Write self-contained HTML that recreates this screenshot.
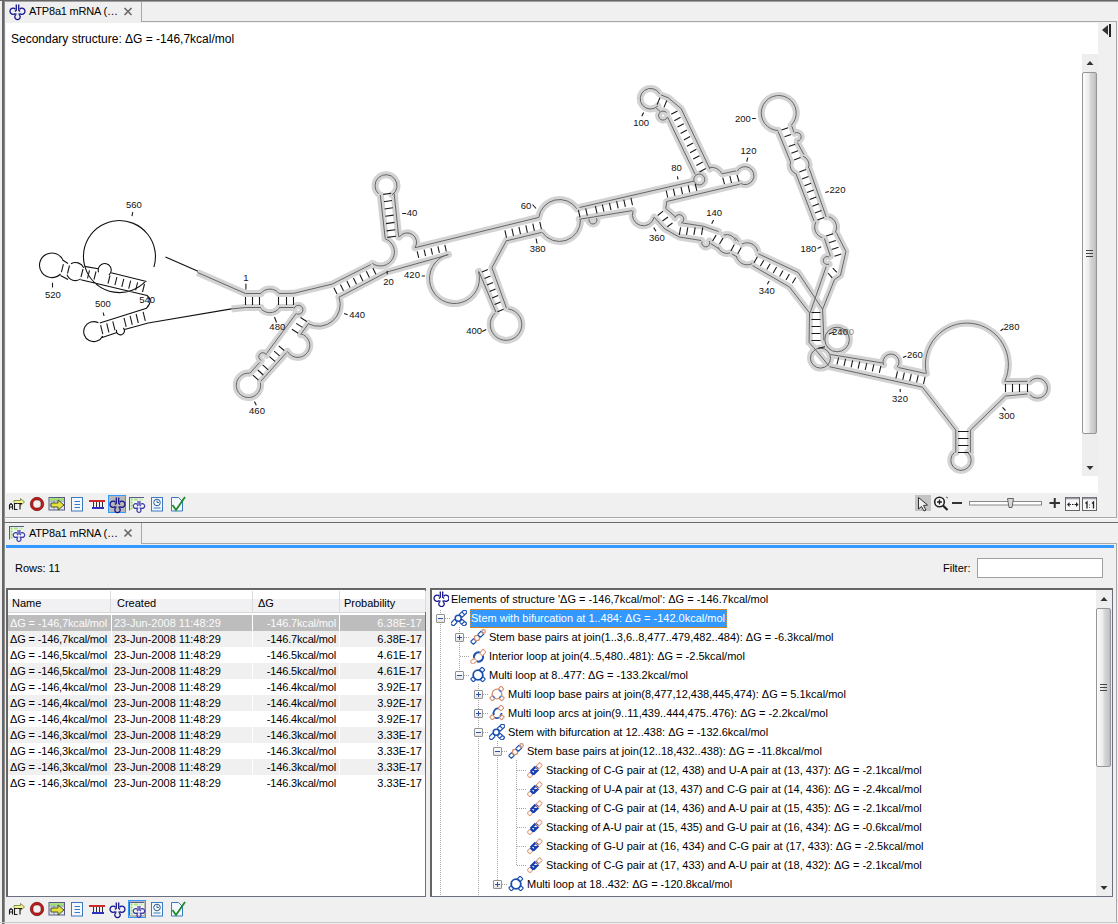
<!DOCTYPE html>
<html><head><meta charset="utf-8">
<style>
*{margin:0;padding:0;box-sizing:border-box}
html,body{width:1118px;height:924px;overflow:hidden;background:#f0f0f0;font-family:"Liberation Sans",sans-serif;font-size:11px;color:#000}
.a{position:absolute}
.t{position:absolute;white-space:pre;line-height:13px}
</style></head><body>
<!-- ============ UPPER PANEL ============ -->
<div class="a" style="left:0;top:0;width:1118px;height:1px;background:#666"></div>
<div class="a" style="left:2px;top:1px;width:1116px;height:1px;background:#a0a0a0"></div>
<div class="a" style="left:2px;top:0;width:2px;height:924px;background:#666"></div>
<div class="a" style="left:4px;top:1px;width:1px;height:923px;background:#8e8e8e"></div>
<div class="a" style="left:1116px;top:21px;width:1px;height:497px;background:#a8a8a8"></div>
<!-- tab strip bottom line -->
<div class="a" style="left:141px;top:21px;width:975px;height:1px;background:#a8a8a8"></div>
<!-- tab -->
<div class="a" style="left:5px;top:2px;width:136px;height:21px;background:#efefef"></div>
<div class="a" style="left:141px;top:2px;width:1px;height:20px;background:#a8a8a8"></div>
<div class="t" style="left:29px;top:5px;letter-spacing:-0.2px">ATP8a1 mRNA (…</div>
<svg class="a" style="left:0;top:0" width="140" height="20"><path d="M124.5 8L131.5 15M131.5 8L124.5 15" stroke="#666" stroke-width="1.6"/></svg>
<!-- content white -->
<div class="a" style="left:6px;top:23px;width:1092px;height:470px;background:#fff"></div>
<div class="t" style="left:11px;top:32px;font-size:12px;line-height:15px">Secondary structure: ΔG = -146,7kcal/mol</div>
<!-- right strip icon -->
<div class="a" style="left:1102px;top:25px;width:0;height:0;border-top:5px solid transparent;border-bottom:5px solid transparent;border-right:6px solid #333"></div>
<div class="a" style="left:1109px;top:24px;width:2px;height:13px;background:#222"></div>
<!-- upper scrollbar -->
<div class="a" style="left:1082px;top:54px;width:16px;height:422px;background:#eeeeee"></div>
<div class="a" style="left:1082px;top:72px;width:15px;height:362px;border:1px solid #969696;border-radius:2px;background:linear-gradient(to right,#fbfbfb,#ececec 45%,#d8d8da 55%,#c6c6ca 90%,#b8b8b8)"></div>
<div class="a" style="left:1086px;top:250px;width:7px;height:1px;background:#444;box-shadow:0 3px 0 #444,0 6px 0 #444"></div>
<svg class="a" style="left:1082px;top:54px" width="16" height="422"><path d="M4.5 11L8 7L11.5 11Z" fill="#333"/><path d="M4.5 412L8 416L11.5 412Z" fill="#333"/></svg>
<svg class="a" style="left:0;top:0" width="1118" height="924" viewBox="0 0 1118 924"><g transform="translate(0.5 0.5)">
<path d="M245.0 293.0 L260.4 293.0 M260.2 293.0A11.8 11.8 0 0 1 278.6 293.0 M278.6 307.8A11.8 11.8 0 0 1 260.2 307.8 M278.4 293.0 L293.3 292.8 L331.6 283.6 L370.3 264.1 M371.8 262.9A14 14 0 1 0 384.6 238.3 M384.7 237.8 L379.8 194.5 M378.0 193.2A11 11 0 1 1 391.5 194.4 M393.6 192.8 L398.2 236.3 M398.7 236.6A9.5 9.5 0 0 1 414.5 247.2 M414.5 247.2 L538.0 217.0 M538.2 217.1A21 21 0 0 1 576.4 208.3 M580.0 219.3A21 21 0 0 1 541.6 231.7 M579.0 207.0 L693.5 180.6 M693.3 179.0A5.5 5.5 0 1 0 704.3 179.0A5.5 5.5 0 1 0 693.3 179.0 M694.7 174.0 L667.0 116.5 M666.8 116.6A4.5 4.5 0 1 1 666.0 112.2 M657.4 105.4A10.3 10.3 0 1 1 659.1 93.4 M655.7 107.6 L659.5 110.8 M660.4 94.4 L667.6 97.2 L680.7 108.2 L709.4 168.5 M708.6 166.8Q717.5 166 721.5 173.3L735.5 170.4 M736.5 170.9A9 9 0 1 1 739.9 182.9 M739.4 183.7 L666.2 201.0 L665.3 208.0 L674.5 216.0 M674.4 217.4A4.5 4.5 0 1 1 680.6 222.7 M682.0 222.5 L702.8 225.7 L718.0 231.0 M723.2 234.6A9.5 9.5 0 0 1 735.3 240.3 M729.6 252.4A9.5 9.5 0 0 1 717.5 246.7 M734.8 237.0 L738.0 241.0 M741.5 243.5A11 11 0 0 1 757.3 250.9 M751.7 263.1A11 11 0 0 1 735.9 255.7 M757.9 253.3 L797.6 272.0 L822.1 308.8 L823.4 340.0 M245.0 307.0 L260.4 307.0 M278.4 307.0 L293.0 307.0 M293.6 308.0A4.5 4.5 0 1 1 296.0 313.3 M295.6 313.1 L266.0 353.1 M260.8 359.9A4 4 0 1 1 266.0 354.7 M259.2 361.9 L249.5 372.6 M259.9 382.3A12.2 12.2 0 1 1 249.3 372.7 M260.2 380.9 L286.0 352.2 M286.9 350.9A12 12 0 1 0 300.4 333.3 M300.2 334.1 L308.1 322.9 M307.9 323.3A21.8 21.8 0 0 0 338.5 296.7 M338.4 296.7 L386.5 271.5 L448.0 254.2 M447.1 254.0A25 25 0 1 0 478.0 271.1 M478.4 271.0 L495.5 311.8 M507.8 308.4A15.8 15.8 0 1 1 494.6 312.6 M506.0 307.7 L491.4 267.1 L506.0 240.0 M506.0 240.3 L541.0 231.9 M578.7 218.8 L631.8 210.1 M596.0 217.6A4 4 0 1 1 588.7 218.2 M632.6 210.4A11 11 0 1 0 653.6 216.8 M653.7 216.8 L664.4 228.5 L678.7 236.5 L700.8 240.0 M708.8 240.5A4 4 0 1 1 701.5 241.1 M710.2 243.0 L718.5 248.4 M731.3 253.3 L736.3 256.3 M752.0 265.1 L789.0 286.5 L809.0 312.4 L808.6 342.0 M777.7 130.0A17.5 17.5 0 1 1 790.7 124.8 M777.6 131.0 L790.0 161.3 M791.2 125.3 L793.5 131.7 M794.1 132.7A4.3 4.3 0 1 1 796.8 140.6 M796.9 142.0 L803.3 154.0 M795.2 173.2A9.5 9.5 0 0 1 790.1 161.3 M802.6 155.7A9.5 9.5 0 0 1 808.0 167.5 M795.4 173.0 L813.6 220.6 M808.6 167.7 L825.7 216.3 M821.9 237.2A11 11 0 0 1 815.5 221.4 M828.3 216.2A11 11 0 0 1 834.7 232.0 M823.9 238.0 L829.9 255.8 M828.6 263.6A4 4 0 1 1 828.6 256.4 M825.7 266.0 L809.6 312.4 M835.8 232.0 L845.4 251.0 L840.0 274.9 L834.0 279.0 L822.1 308.8 M824.3 339.0A12.3 12.3 0 1 0 848.9 339.0A12.3 12.3 0 1 0 824.3 339.0 M810.0 357.6A10 10 0 1 0 830.0 357.6A10 10 0 1 0 810.0 357.6 M808.6 342.0 L813.2 347.0 L828.3 365.2 M830.0 354.0 L882.2 362.5 M883.0 364.3A8 8 0 1 1 896.6 366.7 M897.9 367.0 L925.0 373.0 M828.9 366.2 L922.0 386.7 L955.3 429.6 L955.3 452.0 M925.9 373.1A41.5 41.5 0 1 1 1004.2 381.2 M1005.0 381.0 L1027.0 380.8 M1005.0 395.5 L1027.0 393.5 M1029.3 381.3A10 10 0 1 1 1029.3 394.1 M1005.0 395.5 L969.9 429.6 L969.9 452.0 M967.1 451.9A10.2 10.2 0 1 1 953.9 451.9" fill="none" stroke="#d3d3d3" stroke-width="7.0" stroke-linecap="round" stroke-linejoin="round"/>
<path d="M197 272L245 293 M231 308.4L245 307" fill="none" stroke="#d3d3d3" stroke-width="7.0" stroke-linecap="butt"/>
<path d="M197 272L245 293 M245.0 293.0 L260.4 293.0 M260.2 293.0A11.8 11.8 0 0 1 278.6 293.0 M278.6 307.8A11.8 11.8 0 0 1 260.2 307.8 M278.4 293.0 L293.3 292.8 L331.6 283.6 L370.3 264.1 M371.8 262.9A14 14 0 1 0 384.6 238.3 M384.7 237.8 L379.8 194.5 M378.0 193.2A11 11 0 1 1 391.5 194.4 M393.6 192.8 L398.2 236.3 M398.7 236.6A9.5 9.5 0 0 1 414.5 247.2 M414.5 247.2 L538.0 217.0 M538.2 217.1A21 21 0 0 1 576.4 208.3 M580.0 219.3A21 21 0 0 1 541.6 231.7 M579.0 207.0 L693.5 180.6 M693.3 179.0A5.5 5.5 0 1 0 704.3 179.0A5.5 5.5 0 1 0 693.3 179.0 M694.7 174.0 L667.0 116.5 M666.8 116.6A4.5 4.5 0 1 1 666.0 112.2 M657.4 105.4A10.3 10.3 0 1 1 659.1 93.4 M655.7 107.6 L659.5 110.8 M660.4 94.4 L667.6 97.2 L680.7 108.2 L709.4 168.5 M708.6 166.8Q717.5 166 721.5 173.3L735.5 170.4 M736.5 170.9A9 9 0 1 1 739.9 182.9 M739.4 183.7 L666.2 201.0 L665.3 208.0 L674.5 216.0 M674.4 217.4A4.5 4.5 0 1 1 680.6 222.7 M682.0 222.5 L702.8 225.7 L718.0 231.0 M723.2 234.6A9.5 9.5 0 0 1 735.3 240.3 M729.6 252.4A9.5 9.5 0 0 1 717.5 246.7 M734.8 237.0 L738.0 241.0 M741.5 243.5A11 11 0 0 1 757.3 250.9 M751.7 263.1A11 11 0 0 1 735.9 255.7 M757.9 253.3 L797.6 272.0 L822.1 308.8 L823.4 340.0 M231 308.4L245 307 M245.0 307.0 L260.4 307.0 M278.4 307.0 L293.0 307.0 M293.6 308.0A4.5 4.5 0 1 1 296.0 313.3 M295.6 313.1 L266.0 353.1 M260.8 359.9A4 4 0 1 1 266.0 354.7 M259.2 361.9 L249.5 372.6 M259.9 382.3A12.2 12.2 0 1 1 249.3 372.7 M260.2 380.9 L286.0 352.2 M286.9 350.9A12 12 0 1 0 300.4 333.3 M300.2 334.1 L308.1 322.9 M307.9 323.3A21.8 21.8 0 0 0 338.5 296.7 M338.4 296.7 L386.5 271.5 L448.0 254.2 M447.1 254.0A25 25 0 1 0 478.0 271.1 M478.4 271.0 L495.5 311.8 M507.8 308.4A15.8 15.8 0 1 1 494.6 312.6 M506.0 307.7 L491.4 267.1 L506.0 240.0 M506.0 240.3 L541.0 231.9 M578.7 218.8 L631.8 210.1 M596.0 217.6A4 4 0 1 1 588.7 218.2 M632.6 210.4A11 11 0 1 0 653.6 216.8 M653.7 216.8 L664.4 228.5 L678.7 236.5 L700.8 240.0 M708.8 240.5A4 4 0 1 1 701.5 241.1 M710.2 243.0 L718.5 248.4 M731.3 253.3 L736.3 256.3 M752.0 265.1 L789.0 286.5 L809.0 312.4 L808.6 342.0 M777.7 130.0A17.5 17.5 0 1 1 790.7 124.8 M777.6 131.0 L790.0 161.3 M791.2 125.3 L793.5 131.7 M794.1 132.7A4.3 4.3 0 1 1 796.8 140.6 M796.9 142.0 L803.3 154.0 M795.2 173.2A9.5 9.5 0 0 1 790.1 161.3 M802.6 155.7A9.5 9.5 0 0 1 808.0 167.5 M795.4 173.0 L813.6 220.6 M808.6 167.7 L825.7 216.3 M821.9 237.2A11 11 0 0 1 815.5 221.4 M828.3 216.2A11 11 0 0 1 834.7 232.0 M823.9 238.0 L829.9 255.8 M828.6 263.6A4 4 0 1 1 828.6 256.4 M825.7 266.0 L809.6 312.4 M835.8 232.0 L845.4 251.0 L840.0 274.9 L834.0 279.0 L822.1 308.8 M824.3 339.0A12.3 12.3 0 1 0 848.9 339.0A12.3 12.3 0 1 0 824.3 339.0 M810.0 357.6A10 10 0 1 0 830.0 357.6A10 10 0 1 0 810.0 357.6 M808.6 342.0 L813.2 347.0 L828.3 365.2 M830.0 354.0 L882.2 362.5 M883.0 364.3A8 8 0 1 1 896.6 366.7 M897.9 367.0 L925.0 373.0 M828.9 366.2 L922.0 386.7 L955.3 429.6 L955.3 452.0 M925.9 373.1A41.5 41.5 0 1 1 1004.2 381.2 M1005.0 381.0 L1027.0 380.8 M1005.0 395.5 L1027.0 393.5 M1029.3 381.3A10 10 0 1 1 1029.3 394.1 M1005.0 395.5 L969.9 429.6 L969.9 452.0 M967.1 451.9A10.2 10.2 0 1 1 953.9 451.9" fill="none" stroke="#666" stroke-width="1.0"/>
<path d="M153.4 266.5A36 36 0 1 0 145.2 280.7 M165.0 256.6 L197.5 270.7 M60.0 273.5A12.3 12.3 0 1 1 62.8 260.4 M62.5 259.8 L67.5 263.0 M70.5 263.2A9 9 0 0 1 83.2 267.2 M80.2 278.4A9 9 0 0 1 66.5 274.1 M83.8 265.9 L97.8 268.3 M98.1 271.7A6.5 6.5 0 1 1 108.4 274.5 M110.6 272.3 L146.0 281.0 M60.0 275.0 L67.5 279.0 M80.3 279.3L146.6 295Q153 300 146 307.7L99.3 322.5 M102.2 335.5A10 10 0 1 1 97.9 322.3 M101.0 337.2 L116.5 332.0 M122.8 327.5A4 4 0 1 1 116.1 329.3 M124.0 329.0 L147.7 322.5 L231.0 308.4" fill="none" stroke="#111" stroke-width="1.1"/>
<path d="M132.2 211.6L131.5 215.6 M52.0 282.2L52.0 286.9 M102.7 312.0L103.5 315.5 M245.0 296.5L245.0 304.5 M252.0 296.5L252.0 304.5 M259.0 296.5L259.0 304.5 M278.0 296.5L278.0 304.5 M286.0 296.5L286.0 304.5 M293.0 296.5L293.0 304.5 M333.4 287.2L336.5 293.5 M339.9 283.9L343.0 290.2 M346.4 280.6L349.5 286.9 M352.9 277.4L356.0 283.7 M359.3 274.1L362.4 280.4 M365.8 270.8L368.9 277.1 M372.3 267.5L375.4 273.8 M382.7 193.9L390.7 192.7 M383.4 201.2L391.5 200.0 M384.1 208.5L392.3 207.3 M384.8 215.8L393.1 214.6 M385.5 223.1L394.0 221.9 M386.1 230.4L394.8 229.2 M386.8 236.9L395.5 235.7 M416.7 250.8L418.2 257.3 M423.6 249.2L425.1 255.7 M430.5 247.6L432.0 254.1 M437.4 245.9L438.9 252.4 M444.3 244.3L445.8 250.8 M504.4 229.8L506.0 237.1 M511.4 228.1L513.0 235.4 M518.4 226.4L520.0 233.7 M525.3 224.8L526.9 232.1 M532.3 223.1L533.9 230.4 M539.3 221.4L540.9 228.7 M481.4 271.5L487.4 268.9 M484.0 278.0L490.0 275.4 M486.5 284.5L492.5 281.9 M489.1 291.0L495.1 288.4 M491.6 297.5L497.6 294.9 M494.1 304.0L500.1 301.4 M497.0 311.3L503.0 308.7 M577.9 209.6L579.5 216.8 M585.2 207.9L586.8 215.1 M594.9 205.6L596.5 212.8 M601.8 204.0L603.4 211.2 M608.9 202.4L610.5 209.6 M616.1 200.7L617.7 207.9 M623.3 199.1L624.9 206.3 M630.4 197.4L632.0 204.6 M665.7 190.0L667.2 197.0 M672.9 188.3L674.4 195.3 M680.5 186.6L682.0 193.6 M687.7 184.9L689.2 191.9 M694.8 183.3L696.3 190.3 M670.7 113.8L677.0 110.4 M673.8 120.2L680.1 116.8 M677.0 126.6L683.3 123.2 M680.1 133.0L686.4 129.6 M683.3 139.4L689.6 136.0 M686.4 145.8L692.7 142.4 M689.6 152.2L695.9 148.8 M692.7 158.6L699.0 155.2 M695.9 165.0L702.2 161.6 M699.0 171.4L705.3 168.0 M659.4 97.2L656.6 104.1 M666.3 100.0L663.5 106.9 M722.2 177.2L724.0 183.7 M729.4 175.5L731.0 182.5 M736.5 174.4L738.5 181.0 M657.2 215.0L662.6 210.6 M662.0 220.5L667.5 216.5 M666.8 226.3L672.0 222.5 M680.1 226.8L678.8 234.3 M687.3 226.8L686.0 234.3 M694.7 226.8L693.4 234.3 M702.3 226.8L701.0 234.3 M715.6 234.6L712.1 240.5 M722.5 237.6L719.0 243.5 M733.8 244.0L730.4 250.4 M740.7 246.9L737.2 253.3 M756.9 256.3L753.5 262.2 M763.3 259.7L759.9 265.6 M769.7 263.2L766.3 269.1 M776.1 266.6L772.7 272.5 M782.5 270.0L779.1 275.9 M788.9 273.5L785.5 279.4 M795.3 276.9L791.9 282.8 M781.0 129.5L787.6 127.2 M784.0 136.3L790.6 134.0 M788.2 146.1L794.7 143.7 M790.9 152.8L797.4 150.3 M793.5 159.4L800.0 157.0 M798.8 171.5L805.4 169.0 M801.4 178.4L808.0 175.9 M804.0 185.2L810.6 182.7 M806.6 192.1L813.2 189.6 M809.2 198.9L815.8 196.4 M811.8 205.8L818.4 203.3 M814.4 212.6L821.0 210.1 M817.0 219.5L823.6 217.0 M825.7 235.6L832.5 233.2 M828.5 242.3L835.3 239.9 M831.2 249.1L838.0 246.7 M834.0 255.8L840.8 253.4 M832.3 267.7L836.4 271.9 M827.5 272.5L831.7 277.3 M811.0 312.0L820.0 312.0 M811.0 319.0L820.0 319.0 M811.0 326.0L820.0 326.0 M811.0 333.0L820.0 333.0 M811.0 340.0L820.0 340.0 M817.7 347.7L824.5 346.2 M838.1 357.0L836.5 364.0 M845.1 358.4L843.5 365.4 M852.2 359.8L850.6 366.8 M859.2 361.1L857.6 368.1 M866.3 362.5L864.7 369.5 M873.4 363.9L871.8 370.9 M880.4 365.3L878.8 372.3 M897.0 370.8L895.4 377.8 M903.9 372.2L902.3 379.2 M910.8 373.6L909.2 380.6 M917.7 374.9L916.1 381.9 M924.6 376.3L923.0 383.3 M1005.0 383.5L1005.0 391.5 M1012.0 383.5L1012.0 391.5 M1019.0 383.5L1019.0 391.5 M1027.0 383.5L1027.0 391.5 M957.5 431.0L968.0 431.0 M957.5 438.0L968.0 438.0 M957.5 445.0L968.0 445.0 M957.5 452.0L968.0 452.0 M252.4 374.6L257.9 379.6 M257.3 369.5L262.8 374.5 M262.2 364.3L267.7 369.3 M269.0 356.1L274.5 360.8 M273.6 350.7L279.1 355.4 M278.2 345.3L283.7 350.0 M291.4 328.8L297.7 332.8 M295.7 322.9L302.0 326.9 M300.0 317.0L306.3 321.0 M245.4 283.3L245.4 289.0 M274.0 316.5L276.0 322.0 M253.9 400.9L255.8 404.8 M343.6 313.1L347.1 314.3 M386.7 270.4L386.7 273.8 M421.2 275.5L424.4 275.5 M401.7 213.0L405.8 213.0 M481.7 331.0L485.7 329.0 M532.0 204.0L535.6 208.0 M535.6 238.0L536.5 243.0 M643.1 112.0L641.3 115.7 M676.9 175.8L677.5 179.0 M747.3 157.2L746.2 161.1 M751.6 118.0L755.3 118.0 M824.9 192.1L828.3 190.9 M713.1 219.4L711.2 223.3 M653.2 227.1L655.5 230.7 M768.7 280.4L766.8 283.8 M817.1 247.9L820.7 246.3 M828.4 333.4L833.4 331.4 M902.5 357.0L906.0 355.5 M899.7 388.6L899.7 391.6 M1000.0 330.2L1003.0 328.2 M1002.0 406.8L1005.0 410.0 M62.9 263.6L60.9 271.6 M69.0 265.0L67.0 273.0 M82.5 268.5L80.5 276.5 M89.0 269.8L87.0 277.8 M95.5 271.0L93.5 279.0 M109.5 275.0L107.5 283.0 M116.4 276.7L114.4 284.7 M123.3 278.4L121.3 286.4 M130.2 280.1L128.2 288.1 M137.1 281.8L135.1 289.8 M144.0 283.5L142.0 291.5 M100.1 324.7L102.3 333.7 M106.2 322.8L108.4 331.8 M112.3 320.9L114.5 329.9 M123.5 317.3L125.7 326.3 M129.6 315.4L131.8 324.4 M135.6 313.5L137.8 322.5 M142.6 311.3L144.8 320.3" fill="none" stroke="#1a1a1a" stroke-width="1.1"/>
<g font-family="Liberation Sans" font-size="9.5" fill="#111" text-anchor="middle">
<text x="133.4" y="207.3">560</text>
<text x="52.4" y="297.0">520</text>
<text x="102.4" y="306.9">500</text>
<text x="146.6" y="302.8">540</text>
<text x="245.4" y="280.2">1</text>
<text x="276.8" y="329.9">480</text>
<text x="256.5" y="413.6">460</text>
<text x="356.7" y="317.5">440</text>
<text x="388.0" y="284.0">20</text>
<text x="411.5" y="277.6">420</text>
<text x="411.5" y="215.4">40</text>
<text x="473.6" y="333.8">400</text>
<text x="525.5" y="208.0">60</text>
<text x="537.2" y="251.9">380</text>
<text x="640.6" y="125.2">100</text>
<text x="676.0" y="170.3">80</text>
<text x="748.0" y="153.0">120</text>
<text x="742.4" y="121.1">200</text>
<text x="837.0" y="192.1">220</text>
<text x="713.6" y="215.1">140</text>
<text x="656.4" y="240.0">360</text>
<text x="766.3" y="293.9">340</text>
<text x="807.9" y="251.3">180</text>
<text x="839.5" y="334.6">240</text>
<text x="914.4" y="357.3">260</text>
<text x="899.5" y="401.1">320</text>
<text x="1011.0" y="329.5">280</text>
<text x="1006.3" y="418.9">300</text>
<text x="845.5" y="334" fill="#777" opacity="0.8">260</text>
</g></g></svg>
<!-- toolbar bottom -->
<div class="a" style="left:4px;top:517px;width:1113px;height:1px;background:#aaaaaa"></div>
<div class="a" style="left:5px;top:518px;width:1111px;height:1px;background:#fafafa"></div>
<div class="a" style="left:2px;top:522px;width:1116px;height:1px;background:#6a6a6a"></div>

<!-- ============ LOWER PANEL ============ -->
<div class="a" style="left:5px;top:523px;width:136px;height:21px;background:#efefef"></div>
<div class="a" style="left:141px;top:523px;width:1px;height:21px;background:#a8a8a8"></div>
<div class="t" style="left:29px;top:527px;letter-spacing:-0.2px">ATP8a1 mRNA (…</div>
<svg class="a" style="left:0;top:520px" width="140" height="24"><path d="M124.5 9.5L131.5 16.5M131.5 9.5L124.5 16.5" stroke="#666" stroke-width="1.6"/></svg>
<div class="a" style="left:141px;top:543px;width:976px;height:1px;background:#a8a8a8"></div>
<div class="a" style="left:1116px;top:543px;width:1px;height:379px;background:#a8a8a8"></div>
<div class="a" style="left:6px;top:545px;width:1108px;height:3px;background:#3399ff"></div>
<div class="a" style="left:0;top:922px;width:1118px;height:1px;background:#c8c8c8"></div>

<div class="t" style="left:15px;top:562px">Rows: 11</div>
<div class="t" style="left:943px;top:562px">Filter:</div>
<div class="a" style="left:977px;top:558px;width:126px;height:20px;background:#fff;border:1px solid #a0a0a0"></div>

<!-- table -->
<div class="a" style="left:6px;top:588px;width:420px;height:309px;background:#fff;border:2px solid #666;border-right:1px solid #6a7080;border-bottom:1px solid #6a7080"></div>
<div class="a" style="left:8px;top:599px;width:417px;height:13px;background:#f1f1f3"></div>
<div class="a" style="left:8px;top:612px;width:417px;height:1px;background:#d6d6d6"></div>
<div class="a" style="left:110px;top:591px;width:1px;height:21px;background:#dcdcdc"></div>
<div class="a" style="left:252px;top:591px;width:1px;height:21px;background:#dcdcdc"></div>
<div class="a" style="left:339px;top:591px;width:1px;height:21px;background:#dcdcdc"></div>
<div class="a" style="left:425px;top:591px;width:1px;height:21px;background:#dcdcdc"></div>
<div class="t" style="left:12px;top:597px">Name</div>
<div class="t" style="left:117px;top:597px">Created</div>
<div class="t" style="left:258px;top:597px">ΔG</div>
<div class="t" style="left:344px;top:597px">Probability</div>
<div class="a" style="left:8px;top:615px;width:417px;height:16px;background:#bdbdbd"></div>
<div class="a" style="left:111px;top:615px;width:1px;height:16px;background:#fff"></div>
<div class="a" style="left:252px;top:615px;width:1px;height:16px;background:#fff"></div>
<div class="a" style="left:339px;top:615px;width:1px;height:16px;background:#fff"></div>
<div class="t" style="left:10px;top:617px;color:#fafafa;letter-spacing:-0.15px">ΔG = -146,7kcal/mol</div>
<div class="t" style="left:114px;top:617px;color:#fafafa">23-Jun-2008 11:48:29</div>
<div class="t" style="left:253px;width:83px;text-align:right;top:617px;color:#fafafa;letter-spacing:-0.17px">-146.7kcal/mol</div>
<div class="t" style="left:340px;width:82px;text-align:right;top:617px;color:#fafafa">6.38E-17</div>
<div class="a" style="left:8px;top:631px;width:417px;height:16px;background:#f0f0f0"></div>
<div class="a" style="left:111px;top:631px;width:1px;height:16px;background:#fff"></div>
<div class="a" style="left:252px;top:631px;width:1px;height:16px;background:#fff"></div>
<div class="a" style="left:339px;top:631px;width:1px;height:16px;background:#fff"></div>
<div class="t" style="left:10px;top:633px;color:#000;letter-spacing:-0.15px">ΔG = -146,7kcal/mol</div>
<div class="t" style="left:114px;top:633px;color:#000">23-Jun-2008 11:48:29</div>
<div class="t" style="left:253px;width:83px;text-align:right;top:633px;color:#000;letter-spacing:-0.17px">-146.7kcal/mol</div>
<div class="t" style="left:340px;width:82px;text-align:right;top:633px;color:#000">6.38E-17</div>
<div class="a" style="left:111px;top:647px;width:1px;height:16px;background:#fff"></div>
<div class="a" style="left:252px;top:647px;width:1px;height:16px;background:#fff"></div>
<div class="a" style="left:339px;top:647px;width:1px;height:16px;background:#fff"></div>
<div class="t" style="left:10px;top:649px;color:#000;letter-spacing:-0.15px">ΔG = -146,5kcal/mol</div>
<div class="t" style="left:114px;top:649px;color:#000">23-Jun-2008 11:48:29</div>
<div class="t" style="left:253px;width:83px;text-align:right;top:649px;color:#000;letter-spacing:-0.17px">-146.5kcal/mol</div>
<div class="t" style="left:340px;width:82px;text-align:right;top:649px;color:#000">4.61E-17</div>
<div class="a" style="left:8px;top:663px;width:417px;height:16px;background:#f0f0f0"></div>
<div class="a" style="left:111px;top:663px;width:1px;height:16px;background:#fff"></div>
<div class="a" style="left:252px;top:663px;width:1px;height:16px;background:#fff"></div>
<div class="a" style="left:339px;top:663px;width:1px;height:16px;background:#fff"></div>
<div class="t" style="left:10px;top:665px;color:#000;letter-spacing:-0.15px">ΔG = -146,5kcal/mol</div>
<div class="t" style="left:114px;top:665px;color:#000">23-Jun-2008 11:48:29</div>
<div class="t" style="left:253px;width:83px;text-align:right;top:665px;color:#000;letter-spacing:-0.17px">-146.5kcal/mol</div>
<div class="t" style="left:340px;width:82px;text-align:right;top:665px;color:#000">4.61E-17</div>
<div class="a" style="left:111px;top:679px;width:1px;height:16px;background:#fff"></div>
<div class="a" style="left:252px;top:679px;width:1px;height:16px;background:#fff"></div>
<div class="a" style="left:339px;top:679px;width:1px;height:16px;background:#fff"></div>
<div class="t" style="left:10px;top:681px;color:#000;letter-spacing:-0.15px">ΔG = -146,4kcal/mol</div>
<div class="t" style="left:114px;top:681px;color:#000">23-Jun-2008 11:48:29</div>
<div class="t" style="left:253px;width:83px;text-align:right;top:681px;color:#000;letter-spacing:-0.17px">-146.4kcal/mol</div>
<div class="t" style="left:340px;width:82px;text-align:right;top:681px;color:#000">3.92E-17</div>
<div class="a" style="left:8px;top:695px;width:417px;height:16px;background:#f0f0f0"></div>
<div class="a" style="left:111px;top:695px;width:1px;height:16px;background:#fff"></div>
<div class="a" style="left:252px;top:695px;width:1px;height:16px;background:#fff"></div>
<div class="a" style="left:339px;top:695px;width:1px;height:16px;background:#fff"></div>
<div class="t" style="left:10px;top:697px;color:#000;letter-spacing:-0.15px">ΔG = -146,4kcal/mol</div>
<div class="t" style="left:114px;top:697px;color:#000">23-Jun-2008 11:48:29</div>
<div class="t" style="left:253px;width:83px;text-align:right;top:697px;color:#000;letter-spacing:-0.17px">-146.4kcal/mol</div>
<div class="t" style="left:340px;width:82px;text-align:right;top:697px;color:#000">3.92E-17</div>
<div class="a" style="left:111px;top:711px;width:1px;height:16px;background:#fff"></div>
<div class="a" style="left:252px;top:711px;width:1px;height:16px;background:#fff"></div>
<div class="a" style="left:339px;top:711px;width:1px;height:16px;background:#fff"></div>
<div class="t" style="left:10px;top:713px;color:#000;letter-spacing:-0.15px">ΔG = -146,4kcal/mol</div>
<div class="t" style="left:114px;top:713px;color:#000">23-Jun-2008 11:48:29</div>
<div class="t" style="left:253px;width:83px;text-align:right;top:713px;color:#000;letter-spacing:-0.17px">-146.4kcal/mol</div>
<div class="t" style="left:340px;width:82px;text-align:right;top:713px;color:#000">3.92E-17</div>
<div class="a" style="left:8px;top:727px;width:417px;height:16px;background:#f0f0f0"></div>
<div class="a" style="left:111px;top:727px;width:1px;height:16px;background:#fff"></div>
<div class="a" style="left:252px;top:727px;width:1px;height:16px;background:#fff"></div>
<div class="a" style="left:339px;top:727px;width:1px;height:16px;background:#fff"></div>
<div class="t" style="left:10px;top:729px;color:#000;letter-spacing:-0.15px">ΔG = -146,3kcal/mol</div>
<div class="t" style="left:114px;top:729px;color:#000">23-Jun-2008 11:48:29</div>
<div class="t" style="left:253px;width:83px;text-align:right;top:729px;color:#000;letter-spacing:-0.17px">-146.3kcal/mol</div>
<div class="t" style="left:340px;width:82px;text-align:right;top:729px;color:#000">3.33E-17</div>
<div class="a" style="left:111px;top:743px;width:1px;height:16px;background:#fff"></div>
<div class="a" style="left:252px;top:743px;width:1px;height:16px;background:#fff"></div>
<div class="a" style="left:339px;top:743px;width:1px;height:16px;background:#fff"></div>
<div class="t" style="left:10px;top:745px;color:#000;letter-spacing:-0.15px">ΔG = -146,3kcal/mol</div>
<div class="t" style="left:114px;top:745px;color:#000">23-Jun-2008 11:48:29</div>
<div class="t" style="left:253px;width:83px;text-align:right;top:745px;color:#000;letter-spacing:-0.17px">-146.3kcal/mol</div>
<div class="t" style="left:340px;width:82px;text-align:right;top:745px;color:#000">3.33E-17</div>
<div class="a" style="left:8px;top:759px;width:417px;height:16px;background:#f0f0f0"></div>
<div class="a" style="left:111px;top:759px;width:1px;height:16px;background:#fff"></div>
<div class="a" style="left:252px;top:759px;width:1px;height:16px;background:#fff"></div>
<div class="a" style="left:339px;top:759px;width:1px;height:16px;background:#fff"></div>
<div class="t" style="left:10px;top:761px;color:#000;letter-spacing:-0.15px">ΔG = -146,3kcal/mol</div>
<div class="t" style="left:114px;top:761px;color:#000">23-Jun-2008 11:48:29</div>
<div class="t" style="left:253px;width:83px;text-align:right;top:761px;color:#000;letter-spacing:-0.17px">-146.3kcal/mol</div>
<div class="t" style="left:340px;width:82px;text-align:right;top:761px;color:#000">3.33E-17</div>
<div class="a" style="left:111px;top:775px;width:1px;height:16px;background:#fff"></div>
<div class="a" style="left:252px;top:775px;width:1px;height:16px;background:#fff"></div>
<div class="a" style="left:339px;top:775px;width:1px;height:16px;background:#fff"></div>
<div class="t" style="left:10px;top:777px;color:#000;letter-spacing:-0.15px">ΔG = -146,3kcal/mol</div>
<div class="t" style="left:114px;top:777px;color:#000">23-Jun-2008 11:48:29</div>
<div class="t" style="left:253px;width:83px;text-align:right;top:777px;color:#000;letter-spacing:-0.17px">-146.3kcal/mol</div>
<div class="t" style="left:340px;width:82px;text-align:right;top:777px;color:#000">3.33E-17</div>

<!-- tree -->
<div class="a" style="left:430px;top:588px;width:683px;height:309px;background:#fff;border:2px solid #666;border-right:1px solid #6a7080;border-bottom:1px solid #6a7080"></div>
<div class="a" style="left:440px;top:610px;width:1px;height:286px;background:repeating-linear-gradient(to bottom,#a6a6a6 0 1px,transparent 1px 2px)"></div>
<div class="a" style="left:459px;top:627px;width:1px;height:44px;background:repeating-linear-gradient(to bottom,#a6a6a6 0 1px,transparent 1px 2px)"></div>
<div class="a" style="left:478px;top:684px;width:1px;height:212px;background:repeating-linear-gradient(to bottom,#a6a6a6 0 1px,transparent 1px 2px)"></div>
<div class="a" style="left:497px;top:741px;width:1px;height:139px;background:repeating-linear-gradient(to bottom,#a6a6a6 0 1px,transparent 1px 2px)"></div>
<div class="a" style="left:516px;top:760px;width:1px;height:106px;background:repeating-linear-gradient(to bottom,#a6a6a6 0 1px,transparent 1px 2px)"></div>
<svg class="a" style="left:433px;top:591px" width="16" height="16" viewBox="0 0 16 16"><g fill="none" stroke="#14148c" stroke-width="1.3"><path d="M7.3 0.5V6.2L6 7.4M9.7 0.5V6.2L11 7.4M6.6 9.6L7.4 10.4M10.4 9.6L9.6 10.4"/><path d="M6.4 5.2A3.1 3.1 0 1 0 6.4 9.4M10.6 5.2A3.1 3.1 0 1 1 10.6 9.4M7.2 10.5A2.7 2.7 0 1 0 9.8 10.5"/></g></svg>
<div class="t" style="left:451px;top:593px">Elements of structure 'ΔG = -146,7kcal/mol': ΔG = -146.7kcal/mol</div>
<div class="a" style="left:445px;top:618px;width:5px;height:1px;background:repeating-linear-gradient(to right,#a6a6a6 0 1px,transparent 1px 2px)"></div>
<div class="a" style="left:436px;top:614px;width:9px;height:9px;border:1px solid #919191;border-radius:1px;background:linear-gradient(#fff,#e4e4e4)"></div>
<div class="a" style="left:438px;top:618px;width:5px;height:1px;background:#3050a8"></div>
<svg class="a" style="left:451px;top:610px" width="16" height="16" viewBox="0 0 16 16"><circle cx="7.2" cy="8.3" r="3" fill="none" stroke="#1c4fb0" stroke-width="1.5"/><path d="M11.0 7.4L16.4 2.3M8.2 4.4L13.6 -0.7M11.0 7.4L8.2 4.4M13.7 4.8L10.9 1.9M16.4 2.3L13.6 -0.7" fill="none" stroke="#1c4fb0" stroke-width="1.2"/><path d="M3.6 9.2L-0.4 13.4M6.4 12.0L2.4 16.2M3.6 9.2L6.4 12.0M-0.4 13.4L2.4 16.2" fill="none" stroke="#1c4fb0" stroke-width="1.2"/><path d="M8.3 12.1L13.2 16.5M10.9 9.1L15.8 13.5M8.3 12.1L10.9 9.1M10.7 14.3L13.4 11.3M13.2 16.5L15.8 13.5" fill="none" stroke="#1c4fb0" stroke-width="1.2"/></svg>
<div class="a" style="left:470px;top:609px;width:257px;height:19px;background:#3399ff;border:1px dotted #1a1a1a;outline:1px dotted #e08a20;outline-offset:-1px"></div>
<div class="t" style="left:471px;top:612px;color:#fff">Stem with bifurcation at 1..484: ΔG = -142.0kcal/mol</div>
<div class="a" style="left:464px;top:637px;width:5px;height:1px;background:repeating-linear-gradient(to right,#a6a6a6 0 1px,transparent 1px 2px)"></div>
<div class="a" style="left:455px;top:633px;width:9px;height:9px;border:1px solid #919191;border-radius:1px;background:linear-gradient(#fff,#e4e4e4)"></div>
<div class="a" style="left:457px;top:637px;width:5px;height:1px;background:#3050a8"></div>
<div class="a" style="left:459px;top:635px;width:1px;height:5px;background:#3050a8"></div>
<svg class="a" style="left:470px;top:629px" width="16" height="16" viewBox="0 0 16 16"><path d="M3.4 15.4L6.4 12.4M0.6 12.6L3.6 9.6M3.4 15.4L0.6 12.6M6.4 12.4L3.6 9.6" fill="none" stroke="#1c4fb0" stroke-width="1.3"/><circle cx="7" cy="9" r="2.6" fill="none" stroke="#d09070" stroke-width="1.3"/><path d="M10.4 8.4L13.9 4.9M7.6 5.6L11.1 2.1M10.4 8.4L7.6 5.6M13.9 4.9L11.1 2.1" fill="none" stroke="#1c4fb0" stroke-width="1.3"/><circle cx="13.5" cy="2.5" r="1.8" fill="none" stroke="#d09070" stroke-width="1.2"/></svg>
<div class="t" style="left:489px;top:631px">Stem base pairs at join(1..3,6..8,477..479,482..484): ΔG = -6.3kcal/mol</div>
<div class="a" style="left:460px;top:656px;width:9px;height:1px;background:repeating-linear-gradient(to right,#a6a6a6 0 1px,transparent 1px 2px)"></div>
<svg class="a" style="left:470px;top:648px" width="16" height="16" viewBox="0 0 16 16"><path d="M4.6 11.2A4.6 4.6 0 0 1 10.6 4.8M12.6 7A4.6 4.6 0 0 1 6.6 13.2" fill="none" stroke="#1c4fb0" stroke-width="2"/><path d="M12.5 7.8L16.0 3.8M9.5 5.2L13.0 1.2M12.5 7.8L9.5 5.2M16.0 3.8L13.0 1.2" fill="none" stroke="#e0a080" stroke-width="1.1"/><path d="M4.2 10.0L0.2 13.5M6.8 13.0L2.8 16.5M4.2 10.0L6.8 13.0M0.2 13.5L2.8 16.5" fill="none" stroke="#e0a080" stroke-width="1.1"/></svg>
<div class="t" style="left:489px;top:650px">Interior loop at join(4..5,480..481): ΔG = -2.5kcal/mol</div>
<div class="a" style="left:464px;top:675px;width:5px;height:1px;background:repeating-linear-gradient(to right,#a6a6a6 0 1px,transparent 1px 2px)"></div>
<div class="a" style="left:455px;top:671px;width:9px;height:9px;border:1px solid #919191;border-radius:1px;background:linear-gradient(#fff,#e4e4e4)"></div>
<div class="a" style="left:457px;top:675px;width:5px;height:1px;background:#3050a8"></div>
<svg class="a" style="left:470px;top:667px" width="16" height="16" viewBox="0 0 16 16"><circle cx="8" cy="8" r="4.8" fill="none" stroke="#1c4fb0" stroke-width="1.8"/><path d="M11.9 5.9L14.9 2.9M9.1 3.1L12.1 0.1M11.9 5.9L9.1 3.1M14.9 2.9L12.1 0.1" fill="none" stroke="#1c4fb0" stroke-width="1.2"/><path d="M3.1 9.6L0.6 12.1M5.9 12.4L3.4 14.9M3.1 9.6L5.9 12.4M0.6 12.1L3.4 14.9" fill="none" stroke="#1c4fb0" stroke-width="1.2"/><path d="M10.1 12.4L12.6 14.9M12.9 9.6L15.4 12.1M10.1 12.4L12.9 9.6M12.6 14.9L15.4 12.1" fill="none" stroke="#1c4fb0" stroke-width="1.2"/></svg>
<div class="t" style="left:489px;top:669px">Multi loop at 8..477: ΔG = -133.2kcal/mol</div>
<div class="a" style="left:483px;top:694px;width:5px;height:1px;background:repeating-linear-gradient(to right,#a6a6a6 0 1px,transparent 1px 2px)"></div>
<div class="a" style="left:474px;top:690px;width:9px;height:9px;border:1px solid #919191;border-radius:1px;background:linear-gradient(#fff,#e4e4e4)"></div>
<div class="a" style="left:476px;top:694px;width:5px;height:1px;background:#3050a8"></div>
<div class="a" style="left:478px;top:692px;width:1px;height:5px;background:#3050a8"></div>
<svg class="a" style="left:489px;top:686px" width="16" height="16" viewBox="0 0 16 16"><circle cx="8" cy="8" r="4.8" fill="none" stroke="#d09070" stroke-width="1.3"/><path d="M11.9 5.9L14.9 2.9M9.1 3.1L12.1 0.1M11.9 5.9L9.1 3.1M14.9 2.9L12.1 0.1" fill="none" stroke="#d09070" stroke-width="1.1"/><path d="M3.1 9.6L0.6 12.1M5.9 12.4L3.4 14.9M3.1 9.6L5.9 12.4M0.6 12.1L3.4 14.9" fill="none" stroke="#d09070" stroke-width="1.1"/><path d="M10.1 12.4L12.6 14.9M12.9 9.6L15.4 12.1M10.1 12.4L12.9 9.6M12.6 14.9L15.4 12.1" fill="none" stroke="#d09070" stroke-width="1.1"/><path d="M10 4L12 6M4 10L6 12M12 10L10 12" stroke="#4a7ad8" stroke-width="1.2"/></svg>
<div class="t" style="left:508px;top:688px">Multi loop base pairs at join(8,477,12,438,445,474): ΔG = 5.1kcal/mol</div>
<div class="a" style="left:483px;top:713px;width:5px;height:1px;background:repeating-linear-gradient(to right,#a6a6a6 0 1px,transparent 1px 2px)"></div>
<div class="a" style="left:474px;top:709px;width:9px;height:9px;border:1px solid #919191;border-radius:1px;background:linear-gradient(#fff,#e4e4e4)"></div>
<div class="a" style="left:476px;top:713px;width:5px;height:1px;background:#3050a8"></div>
<div class="a" style="left:478px;top:711px;width:1px;height:5px;background:#3050a8"></div>
<svg class="a" style="left:489px;top:705px" width="16" height="16" viewBox="0 0 16 16"><path d="M5 10A4.6 4.6 0 0 1 10 3.5M12.5 8A4.6 4.6 0 0 1 11 11.5M5.5 12.5A4.6 4.6 0 0 0 10 12.5" fill="none" stroke="#1c4fb0" stroke-width="1.8"/><path d="M11.9 5.9L14.9 2.9M9.1 3.1L12.1 0.1M11.9 5.9L9.1 3.1M14.9 2.9L12.1 0.1" fill="none" stroke="#d09070" stroke-width="1.1"/><path d="M3.1 9.6L0.6 12.1M5.9 12.4L3.4 14.9M3.1 9.6L5.9 12.4M0.6 12.1L3.4 14.9" fill="none" stroke="#d09070" stroke-width="1.1"/><path d="M10.1 12.4L12.6 14.9M12.9 9.6L15.4 12.1M10.1 12.4L12.9 9.6M12.6 14.9L15.4 12.1" fill="none" stroke="#d09070" stroke-width="1.1"/></svg>
<div class="t" style="left:508px;top:707px">Multi loop arcs at join(9..11,439..444,475..476): ΔG = -2.2kcal/mol</div>
<div class="a" style="left:483px;top:732px;width:5px;height:1px;background:repeating-linear-gradient(to right,#a6a6a6 0 1px,transparent 1px 2px)"></div>
<div class="a" style="left:474px;top:728px;width:9px;height:9px;border:1px solid #919191;border-radius:1px;background:linear-gradient(#fff,#e4e4e4)"></div>
<div class="a" style="left:476px;top:732px;width:5px;height:1px;background:#3050a8"></div>
<svg class="a" style="left:489px;top:724px" width="16" height="16" viewBox="0 0 16 16"><circle cx="7.2" cy="8.3" r="3" fill="none" stroke="#1c4fb0" stroke-width="1.5"/><path d="M11.0 7.4L16.4 2.3M8.2 4.4L13.6 -0.7M11.0 7.4L8.2 4.4M13.7 4.8L10.9 1.9M16.4 2.3L13.6 -0.7" fill="none" stroke="#1c4fb0" stroke-width="1.2"/><path d="M3.6 9.2L-0.4 13.4M6.4 12.0L2.4 16.2M3.6 9.2L6.4 12.0M-0.4 13.4L2.4 16.2" fill="none" stroke="#1c4fb0" stroke-width="1.2"/><path d="M8.3 12.1L13.2 16.5M10.9 9.1L15.8 13.5M8.3 12.1L10.9 9.1M10.7 14.3L13.4 11.3M13.2 16.5L15.8 13.5" fill="none" stroke="#1c4fb0" stroke-width="1.2"/></svg>
<div class="t" style="left:508px;top:726px">Stem with bifurcation at 12..438: ΔG = -132.6kcal/mol</div>
<div class="a" style="left:502px;top:751px;width:5px;height:1px;background:repeating-linear-gradient(to right,#a6a6a6 0 1px,transparent 1px 2px)"></div>
<div class="a" style="left:493px;top:747px;width:9px;height:9px;border:1px solid #919191;border-radius:1px;background:linear-gradient(#fff,#e4e4e4)"></div>
<div class="a" style="left:495px;top:751px;width:5px;height:1px;background:#3050a8"></div>
<svg class="a" style="left:508px;top:743px" width="16" height="16" viewBox="0 0 16 16"><path d="M3.4 15.4L6.4 12.4M0.6 12.6L3.6 9.6M3.4 15.4L0.6 12.6M6.4 12.4L3.6 9.6" fill="none" stroke="#1c4fb0" stroke-width="1.3"/><circle cx="7" cy="9" r="2.6" fill="none" stroke="#d09070" stroke-width="1.3"/><path d="M10.4 8.4L13.9 4.9M7.6 5.6L11.1 2.1M10.4 8.4L7.6 5.6M13.9 4.9L11.1 2.1" fill="none" stroke="#1c4fb0" stroke-width="1.3"/><circle cx="13.5" cy="2.5" r="1.8" fill="none" stroke="#d09070" stroke-width="1.2"/></svg>
<div class="t" style="left:527px;top:745px">Stem base pairs at join(12..18,432..438): ΔG = -11.8kcal/mol</div>
<div class="a" style="left:517px;top:770px;width:9px;height:1px;background:repeating-linear-gradient(to right,#a6a6a6 0 1px,transparent 1px 2px)"></div>
<svg class="a" style="left:527px;top:762px" width="16" height="16" viewBox="0 0 16 16"><path d="M2.9 15.9L6.4 12.4M0.1 13.1L3.6 9.6M2.9 15.9L0.1 13.1M6.4 12.4L3.6 9.6" fill="none" stroke="#e0a080" stroke-width="1.1"/><path d="M6.4 12.4L11.4 7.4M3.6 9.6L8.6 4.6M6.4 12.4L3.6 9.6M8.9 9.9L6.1 7.1M11.4 7.4L8.6 4.6" fill="none" stroke="#1840b0" stroke-width="2.2"/><path d="M11.4 7.4L15.4 3.4M8.6 4.6L12.6 0.6M11.4 7.4L8.6 4.6M15.4 3.4L12.6 0.6" fill="none" stroke="#e0a080" stroke-width="1.1"/></svg>
<div class="t" style="left:546px;top:764px">Stacking of C-G pair at (12, 438) and U-A pair at (13, 437): ΔG = -2.1kcal/mol</div>
<div class="a" style="left:517px;top:789px;width:9px;height:1px;background:repeating-linear-gradient(to right,#a6a6a6 0 1px,transparent 1px 2px)"></div>
<svg class="a" style="left:527px;top:781px" width="16" height="16" viewBox="0 0 16 16"><path d="M2.9 15.9L6.4 12.4M0.1 13.1L3.6 9.6M2.9 15.9L0.1 13.1M6.4 12.4L3.6 9.6" fill="none" stroke="#e0a080" stroke-width="1.1"/><path d="M6.4 12.4L11.4 7.4M3.6 9.6L8.6 4.6M6.4 12.4L3.6 9.6M8.9 9.9L6.1 7.1M11.4 7.4L8.6 4.6" fill="none" stroke="#1840b0" stroke-width="2.2"/><path d="M11.4 7.4L15.4 3.4M8.6 4.6L12.6 0.6M11.4 7.4L8.6 4.6M15.4 3.4L12.6 0.6" fill="none" stroke="#e0a080" stroke-width="1.1"/></svg>
<div class="t" style="left:546px;top:783px">Stacking of U-A pair at (13, 437) and C-G pair at (14, 436): ΔG = -2.4kcal/mol</div>
<div class="a" style="left:517px;top:808px;width:9px;height:1px;background:repeating-linear-gradient(to right,#a6a6a6 0 1px,transparent 1px 2px)"></div>
<svg class="a" style="left:527px;top:800px" width="16" height="16" viewBox="0 0 16 16"><path d="M2.9 15.9L6.4 12.4M0.1 13.1L3.6 9.6M2.9 15.9L0.1 13.1M6.4 12.4L3.6 9.6" fill="none" stroke="#e0a080" stroke-width="1.1"/><path d="M6.4 12.4L11.4 7.4M3.6 9.6L8.6 4.6M6.4 12.4L3.6 9.6M8.9 9.9L6.1 7.1M11.4 7.4L8.6 4.6" fill="none" stroke="#1840b0" stroke-width="2.2"/><path d="M11.4 7.4L15.4 3.4M8.6 4.6L12.6 0.6M11.4 7.4L8.6 4.6M15.4 3.4L12.6 0.6" fill="none" stroke="#e0a080" stroke-width="1.1"/></svg>
<div class="t" style="left:546px;top:802px">Stacking of C-G pair at (14, 436) and A-U pair at (15, 435): ΔG = -2.1kcal/mol</div>
<div class="a" style="left:517px;top:827px;width:9px;height:1px;background:repeating-linear-gradient(to right,#a6a6a6 0 1px,transparent 1px 2px)"></div>
<svg class="a" style="left:527px;top:819px" width="16" height="16" viewBox="0 0 16 16"><path d="M2.9 15.9L6.4 12.4M0.1 13.1L3.6 9.6M2.9 15.9L0.1 13.1M6.4 12.4L3.6 9.6" fill="none" stroke="#e0a080" stroke-width="1.1"/><path d="M6.4 12.4L11.4 7.4M3.6 9.6L8.6 4.6M6.4 12.4L3.6 9.6M8.9 9.9L6.1 7.1M11.4 7.4L8.6 4.6" fill="none" stroke="#1840b0" stroke-width="2.2"/><path d="M11.4 7.4L15.4 3.4M8.6 4.6L12.6 0.6M11.4 7.4L8.6 4.6M15.4 3.4L12.6 0.6" fill="none" stroke="#e0a080" stroke-width="1.1"/></svg>
<div class="t" style="left:546px;top:821px">Stacking of A-U pair at (15, 435) and G-U pair at (16, 434): ΔG = -0.6kcal/mol</div>
<div class="a" style="left:517px;top:846px;width:9px;height:1px;background:repeating-linear-gradient(to right,#a6a6a6 0 1px,transparent 1px 2px)"></div>
<svg class="a" style="left:527px;top:838px" width="16" height="16" viewBox="0 0 16 16"><path d="M2.9 15.9L6.4 12.4M0.1 13.1L3.6 9.6M2.9 15.9L0.1 13.1M6.4 12.4L3.6 9.6" fill="none" stroke="#e0a080" stroke-width="1.1"/><path d="M6.4 12.4L11.4 7.4M3.6 9.6L8.6 4.6M6.4 12.4L3.6 9.6M8.9 9.9L6.1 7.1M11.4 7.4L8.6 4.6" fill="none" stroke="#1840b0" stroke-width="2.2"/><path d="M11.4 7.4L15.4 3.4M8.6 4.6L12.6 0.6M11.4 7.4L8.6 4.6M15.4 3.4L12.6 0.6" fill="none" stroke="#e0a080" stroke-width="1.1"/></svg>
<div class="t" style="left:546px;top:840px">Stacking of G-U pair at (16, 434) and C-G pair at (17, 433): ΔG = -2.5kcal/mol</div>
<div class="a" style="left:517px;top:865px;width:9px;height:1px;background:repeating-linear-gradient(to right,#a6a6a6 0 1px,transparent 1px 2px)"></div>
<svg class="a" style="left:527px;top:857px" width="16" height="16" viewBox="0 0 16 16"><path d="M2.9 15.9L6.4 12.4M0.1 13.1L3.6 9.6M2.9 15.9L0.1 13.1M6.4 12.4L3.6 9.6" fill="none" stroke="#e0a080" stroke-width="1.1"/><path d="M6.4 12.4L11.4 7.4M3.6 9.6L8.6 4.6M6.4 12.4L3.6 9.6M8.9 9.9L6.1 7.1M11.4 7.4L8.6 4.6" fill="none" stroke="#1840b0" stroke-width="2.2"/><path d="M11.4 7.4L15.4 3.4M8.6 4.6L12.6 0.6M11.4 7.4L8.6 4.6M15.4 3.4L12.6 0.6" fill="none" stroke="#e0a080" stroke-width="1.1"/></svg>
<div class="t" style="left:546px;top:859px">Stacking of C-G pair at (17, 433) and A-U pair at (18, 432): ΔG = -2.1kcal/mol</div>
<div class="a" style="left:502px;top:884px;width:5px;height:1px;background:repeating-linear-gradient(to right,#a6a6a6 0 1px,transparent 1px 2px)"></div>
<div class="a" style="left:493px;top:880px;width:9px;height:9px;border:1px solid #919191;border-radius:1px;background:linear-gradient(#fff,#e4e4e4)"></div>
<div class="a" style="left:495px;top:884px;width:5px;height:1px;background:#3050a8"></div>
<div class="a" style="left:497px;top:882px;width:1px;height:5px;background:#3050a8"></div>
<svg class="a" style="left:508px;top:876px" width="16" height="16" viewBox="0 0 16 16"><circle cx="8" cy="8" r="4.8" fill="none" stroke="#1c4fb0" stroke-width="1.8"/><path d="M11.9 5.9L14.9 2.9M9.1 3.1L12.1 0.1M11.9 5.9L9.1 3.1M14.9 2.9L12.1 0.1" fill="none" stroke="#1c4fb0" stroke-width="1.2"/><path d="M3.1 9.6L0.6 12.1M5.9 12.4L3.4 14.9M3.1 9.6L5.9 12.4M0.6 12.1L3.4 14.9" fill="none" stroke="#1c4fb0" stroke-width="1.2"/><path d="M10.1 12.4L12.6 14.9M12.9 9.6L15.4 12.1M10.1 12.4L12.9 9.6M12.6 14.9L15.4 12.1" fill="none" stroke="#1c4fb0" stroke-width="1.2"/></svg>
<div class="t" style="left:527px;top:878px">Multi loop at 18..432: ΔG = -120.8kcal/mol</div>
<div class="a" style="left:1096px;top:590px;width:16px;height:306px;background:#eeeeee"></div>
<div class="a" style="left:1096px;top:608px;width:15px;height:159px;border:1px solid #969696;border-radius:2px;background:linear-gradient(to right,#fbfbfb,#ececec 45%,#d8d8da 55%,#c6c6ca 90%,#b8b8b8)"></div>
<div class="a" style="left:1100px;top:684px;width:7px;height:1px;background:#444;box-shadow:0 3px 0 #444,0 6px 0 #444"></div>
<svg class="a" style="left:1096px;top:590px" width="16" height="306"><path d="M4.5 11L8 7L11.5 11Z" fill="#333"/><path d="M4.5 296L8 300L11.5 296Z" fill="#333"/></svg>
<svg class="a" style="left:0;top:0" width="200" height="924"><path d="M14 502.5V500.5H20.5V498.5L24.5 502L20.5 505.5V503.5H16" fill="#f4f090" stroke="#6a7a30" stroke-width="0.8"/><path d="M9.5 509.5V505L11 503.5L12.5 505V509.5M9.5 507H12.5M17.5 503.5H14.5V509.5H17.5M18 503.5H22M20 503.5V509.5" fill="none" stroke="#1a1a1a" stroke-width="1.1"/><circle cx="37" cy="504" r="5.4" fill="none" stroke="#c41a1a" stroke-width="2.6"/><circle cx="37" cy="504" r="6.7" fill="none" stroke="#6a1010" stroke-width="0.7"/><circle cx="37" cy="504" r="4.1" fill="#f2f2f2" stroke="#5a1010" stroke-width="0.6"/><rect x="49" y="497.5" width="15.5" height="12.5" fill="#dde8f4" stroke="#5a5a80" stroke-width="1"/><path d="M49.5 501H64M49.5 505H64M54 498V510M59 498V510" stroke="#7a7aa0" stroke-width="0.8"/><rect x="50" y="498.2" width="14" height="2.4" fill="#9ee070"/><path d="M51 503H58V500L64 505L58 510V507H51Z" fill="#e8e040" stroke="#3a4a20" stroke-width="0.9"/><rect x="71.5" y="497.5" width="11" height="13.5" fill="#f4f8fc" stroke="#3a7ac0" stroke-width="1"/><path d="M74.5 501.5H80M74.5 504.5H80M74.5 507.5H80" stroke="#3a7ac0" stroke-width="1"/><rect x="89" y="500" width="16" height="2" fill="#d02828"/><rect x="92" y="507" width="12" height="2" fill="#3030c0"/><path d="M93.5 502V507M96.5 502V507M99.5 502V507M102.5 502V507" stroke="#333" stroke-width="1"/><rect x="108.5" y="495.5" width="17" height="17" fill="#b8b8b8" stroke="#3399ff" stroke-width="1"/><g transform="translate(109,497) scale(1)" fill="none" stroke="#14148c" stroke-width="1.3"><path d="M7.3 0.5V6.2L6 7.4M9.7 0.5V6.2L11 7.4M6.6 9.6L7.4 10.4M10.4 9.6L9.6 10.4"/><path d="M6.4 5.2A3.1 3.1 0 1 0 6.4 9.4M10.6 5.2A3.1 3.1 0 1 1 10.6 9.4M7.2 10.5A2.7 2.7 0 1 0 9.8 10.5"/></g><g transform="translate(129,497)"><rect x="0" y="0" width="15" height="13" fill="#f4f4f8"/><path d="M0.5 0V13.5M0 0.5H15" stroke="#5a5a8a" stroke-width="1"/><rect x="1.5" y="1.5" width="2" height="2" fill="#8ee060"/><rect x="1.5" y="4.5" width="2" height="2" fill="#8ee060"/><rect x="1.5" y="7.5" width="2" height="2" fill="#8ee060"/><rect x="1.5" y="10.5" width="2" height="2" fill="#8ee060"/><rect x="5" y="1.5" width="4" height="2" fill="#a8e880"/><rect x="10" y="1.5" width="4" height="2" fill="#c8f0b0"/></g><g transform="translate(132.5,500.5) scale(0.76)" fill="none" stroke="#3c3ca8" stroke-width="1.6"><path d="M7.3 0.5V6.2L6 7.4M9.7 0.5V6.2L11 7.4M6.6 9.6L7.4 10.4M10.4 9.6L9.6 10.4"/><path d="M6.4 5.2A3.1 3.1 0 1 0 6.4 9.4M10.6 5.2A3.1 3.1 0 1 1 10.6 9.4M7.2 10.5A2.7 2.7 0 1 0 9.8 10.5"/></g><rect x="151.5" y="497.5" width="11" height="13.5" fill="#f4f8fc" stroke="#3a7ac0" stroke-width="1"/><circle cx="157" cy="502.5" r="3.3" fill="none" stroke="#2a5a90" stroke-width="1"/><path d="M157 500.5V502.5H159" stroke="#2a5a90" stroke-width="0.9" fill="none"/><path d="M153.5 508H160.5" stroke="#3a7ac0" stroke-width="1"/><path d="M171.5 497.5H178.5L182.5 501.5V511H171.5Z" fill="#f4f8fc" stroke="#3a7ac0" stroke-width="1"/><path d="M172.5 505L176 510L185 497" fill="none" stroke="#1a8a2a" stroke-width="1.8"/></svg>
<svg class="a" style="left:0;top:0" width="200" height="924"><path d="M14 907.5V905.5H20.5V903.5L24.5 907L20.5 910.5V908.5H16" fill="#f4f090" stroke="#6a7a30" stroke-width="0.8"/><path d="M9.5 914.5V910L11 908.5L12.5 910V914.5M9.5 912H12.5M17.5 908.5H14.5V914.5H17.5M18 908.5H22M20 908.5V914.5" fill="none" stroke="#1a1a1a" stroke-width="1.1"/><circle cx="37" cy="909" r="5.4" fill="none" stroke="#c41a1a" stroke-width="2.6"/><circle cx="37" cy="909" r="6.7" fill="none" stroke="#6a1010" stroke-width="0.7"/><circle cx="37" cy="909" r="4.1" fill="#f2f2f2" stroke="#5a1010" stroke-width="0.6"/><rect x="49" y="902.5" width="15.5" height="12.5" fill="#dde8f4" stroke="#5a5a80" stroke-width="1"/><path d="M49.5 906H64M49.5 910H64M54 903V915M59 903V915" stroke="#7a7aa0" stroke-width="0.8"/><rect x="50" y="903.2" width="14" height="2.4" fill="#9ee070"/><path d="M51 908H58V905L64 910L58 915V912H51Z" fill="#e8e040" stroke="#3a4a20" stroke-width="0.9"/><rect x="71.5" y="902.5" width="11" height="13.5" fill="#f4f8fc" stroke="#3a7ac0" stroke-width="1"/><path d="M74.5 906.5H80M74.5 909.5H80M74.5 912.5H80" stroke="#3a7ac0" stroke-width="1"/><rect x="89" y="905" width="16" height="2" fill="#d02828"/><rect x="92" y="912" width="12" height="2" fill="#3030c0"/><path d="M93.5 907V912M96.5 907V912M99.5 907V912M102.5 907V912" stroke="#333" stroke-width="1"/><g transform="translate(109,902) scale(1)" fill="none" stroke="#14148c" stroke-width="1.3"><path d="M7.3 0.5V6.2L6 7.4M9.7 0.5V6.2L11 7.4M6.6 9.6L7.4 10.4M10.4 9.6L9.6 10.4"/><path d="M6.4 5.2A3.1 3.1 0 1 0 6.4 9.4M10.6 5.2A3.1 3.1 0 1 1 10.6 9.4M7.2 10.5A2.7 2.7 0 1 0 9.8 10.5"/></g><rect x="128.5" y="900.5" width="17" height="17" fill="#b8b8b8" stroke="#3399ff" stroke-width="1"/><g transform="translate(129,902)"><rect x="0" y="0" width="15" height="13" fill="#f4f4f8"/><path d="M0.5 0V13.5M0 0.5H15" stroke="#5a5a8a" stroke-width="1"/><rect x="1.5" y="1.5" width="2" height="2" fill="#8ee060"/><rect x="1.5" y="4.5" width="2" height="2" fill="#8ee060"/><rect x="1.5" y="7.5" width="2" height="2" fill="#8ee060"/><rect x="1.5" y="10.5" width="2" height="2" fill="#8ee060"/><rect x="5" y="1.5" width="4" height="2" fill="#a8e880"/><rect x="10" y="1.5" width="4" height="2" fill="#c8f0b0"/></g><g transform="translate(132.5,905.5) scale(0.76)" fill="none" stroke="#3c3ca8" stroke-width="1.6"><path d="M7.3 0.5V6.2L6 7.4M9.7 0.5V6.2L11 7.4M6.6 9.6L7.4 10.4M10.4 9.6L9.6 10.4"/><path d="M6.4 5.2A3.1 3.1 0 1 0 6.4 9.4M10.6 5.2A3.1 3.1 0 1 1 10.6 9.4M7.2 10.5A2.7 2.7 0 1 0 9.8 10.5"/></g><rect x="151.5" y="902.5" width="11" height="13.5" fill="#f4f8fc" stroke="#3a7ac0" stroke-width="1"/><circle cx="157" cy="907.5" r="3.3" fill="none" stroke="#2a5a90" stroke-width="1"/><path d="M157 905.5V907.5H159" stroke="#2a5a90" stroke-width="0.9" fill="none"/><path d="M153.5 913H160.5" stroke="#3a7ac0" stroke-width="1"/><path d="M171.5 902.5H178.5L182.5 906.5V916H171.5Z" fill="#f4f8fc" stroke="#3a7ac0" stroke-width="1"/><path d="M172.5 910L176 915L185 902" fill="none" stroke="#1a8a2a" stroke-width="1.8"/></svg>
<svg class="a" style="left:0;top:0" width="1118" height="924"><rect x="915" y="495" width="16" height="16" fill="#c4c4c4"/><path d="M918.5 497.5L918.5 509L921.5 506.5L924 511L926 510L923.5 505.5L927.5 505Z" fill="#f0f0f0" stroke="#333" stroke-width="1"/><circle cx="939.5" cy="502" r="4.8" fill="#fff" stroke="#222" stroke-width="1.6"/><path d="M937 502H942M939.5 499.5V504.5" stroke="#222" stroke-width="1.4"/><path d="M943 505.5L947.5 510" stroke="#222" stroke-width="2.2"/><path d="M946 497L948 498" stroke="#555" stroke-width="1"/><rect x="952" y="502" width="10" height="2" fill="#333"/><rect x="969.5" y="501.5" width="72" height="3.5" fill="#fff" stroke="#888" stroke-width="1"/><path d="M1007.5 498.5H1013.5L1012 507.5H1009Z" fill="#d8d8d8" stroke="#666" stroke-width="1"/><path d="M1049.5 503H1060M1054.75 498V508" stroke="#333" stroke-width="2"/><rect x="1065.5" y="497.5" width="14" height="13" fill="#f8f8f8" stroke="#666" stroke-width="1"/><path d="M1066 498.5H1079" stroke="#9a9aa8" stroke-width="1.6"/><path d="M1067 504.5L1069.5 502V507Z M1078.5 504.5L1076 502V507Z" fill="#222"/><path d="M1069.5 504.5H1076" stroke="#222" stroke-width="1" stroke-dasharray="1.5 1"/><rect x="1082.5" y="497.5" width="14" height="13" fill="#f8f8f8" stroke="#666" stroke-width="1"/><path d="M1083 498.5H1096" stroke="#9a9aa8" stroke-width="1.6"/><path d="M1085.5 503.5L1087 502V508.5M1092 503.5L1093.5 502V508.5" fill="none" stroke="#222" stroke-width="1.3"/><path d="M1089.5 504.5V505.5M1089.5 507V508" stroke="#666" stroke-width="1"/></svg>
<svg class="a" style="left:0;top:0" width="200" height="924"><g transform="translate(9,4) scale(1)" fill="none" stroke="#14148c" stroke-width="1.3"><path d="M7.3 0.5V6.2L6 7.4M9.7 0.5V6.2L11 7.4M6.6 9.6L7.4 10.4M10.4 9.6L9.6 10.4"/><path d="M6.4 5.2A3.1 3.1 0 1 0 6.4 9.4M10.6 5.2A3.1 3.1 0 1 1 10.6 9.4M7.2 10.5A2.7 2.7 0 1 0 9.8 10.5"/></g><g transform="translate(9,526)"><rect x="0" y="0" width="15" height="13" fill="#f4f4f8"/><path d="M0.5 0V13.5M0 0.5H15" stroke="#5a5a8a" stroke-width="1"/><rect x="1.5" y="1.5" width="2" height="2" fill="#8ee060"/><rect x="1.5" y="4.5" width="2" height="2" fill="#8ee060"/><rect x="1.5" y="7.5" width="2" height="2" fill="#8ee060"/><rect x="1.5" y="10.5" width="2" height="2" fill="#8ee060"/><rect x="5" y="1.5" width="4" height="2" fill="#a8e880"/><rect x="10" y="1.5" width="4" height="2" fill="#c8f0b0"/></g><g transform="translate(12.5,529.5) scale(0.76)" fill="none" stroke="#3c3ca8" stroke-width="1.6"><path d="M7.3 0.5V6.2L6 7.4M9.7 0.5V6.2L11 7.4M6.6 9.6L7.4 10.4M10.4 9.6L9.6 10.4"/><path d="M6.4 5.2A3.1 3.1 0 1 0 6.4 9.4M10.6 5.2A3.1 3.1 0 1 1 10.6 9.4M7.2 10.5A2.7 2.7 0 1 0 9.8 10.5"/></g></svg>

</body></html>
